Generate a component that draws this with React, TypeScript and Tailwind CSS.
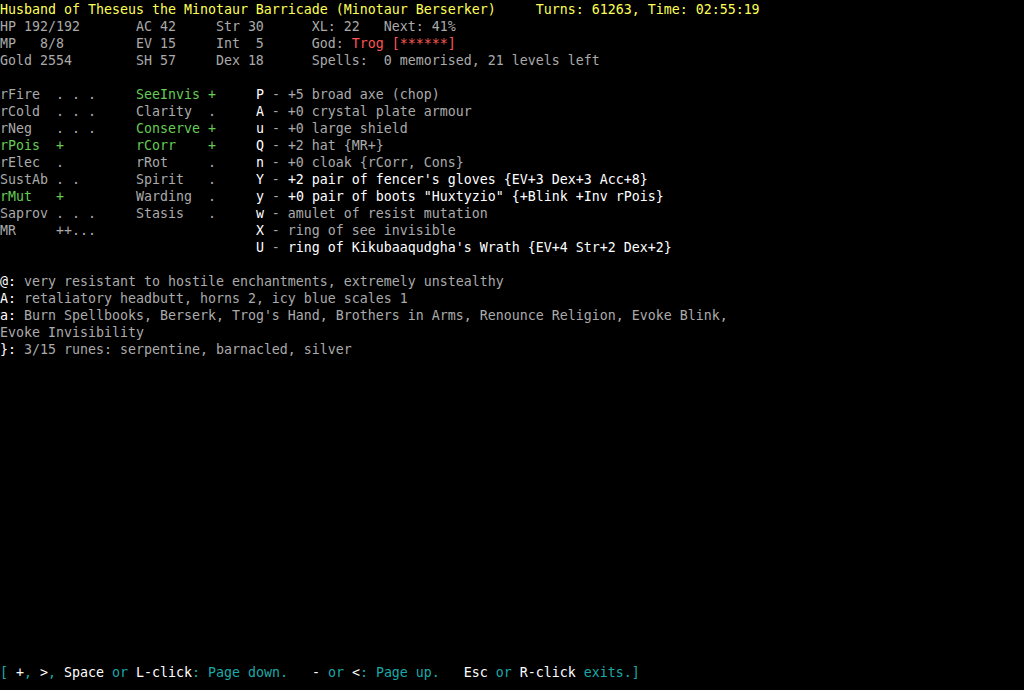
const G = "text-[#aaaaaa]";
const W = "text-[#ffffff]";
const Y = "text-[#ffff55]";
const GR = "text-[#66cc55]";
const R = "text-[#ff5555]";
const C = "text-[#1aa9a9]";

type Seg = [string, string];

const Line = ({ segs }: { segs: Seg[] }) => (
    <div className="h-[17px] whitespace-pre">
        {segs.map(([cls, text], i) => (
            <span key={i} className={cls}>{text}</span>
        ))}
    </div>
);

const lines: Seg[][] = [
    [[Y, "Husband of Theseus the Minotaur Barricade (Minotaur Berserker)     Turns: 61263, Time: 02:55:19"]],
    [[G, "HP 192/192       AC 42     Str 30      XL: 22   Next: 41%"]],
    [[G, "MP   8/8         EV 15     Int  5      God: "], [R, "Trog [******]"]],
    [[G, "Gold 2554        SH 57     Dex 18      Spells:  0 memorised, 21 levels left"]],
    [[G, " "]],
    [[G, "rFire  . . .     "], [GR, "SeeInvis +"], [G, "     "], [W, "P"], [G, " - +5 broad axe (chop)"]],
    [[G, "rCold  . . .     Clarity  .     "], [W, "A"], [G, " - +0 crystal plate armour"]],
    [[G, "rNeg   . . .     "], [GR, "Conserve +"], [G, "     "], [W, "u"], [G, " - +0 large shield"]],
    [[GR, "rPois  +         rCorr    +"], [G, "     "], [W, "Q"], [G, " - +2 hat {MR+}"]],
    [[G, "rElec  .         rRot     .     "], [W, "n"], [G, " - +0 cloak {rCorr, Cons}"]],
    [[G, "SustAb . .       Spirit   .     "], [W, "Y"], [G, " - "], [W, "+2 pair of fencer's gloves {EV+3 Dex+3 Acc+8}"]],
    [[GR, "rMut   +         "], [G, "Warding  .     "], [W, "y"], [G, " - "], [W, "+0 pair of boots \"Huxtyzio\" {+Blink +Inv rPois}"]],
    [[G, "Saprov . . .     Stasis   .     "], [W, "w"], [G, " - amulet of resist mutation"]],
    [[G, "MR     ++...                    "], [W, "X"], [G, " - ring of see invisible"]],
    [[G, "                                "], [W, "U"], [G, " - "], [W, "ring of Kikubaaqudgha's Wrath {EV+4 Str+2 Dex+2}"]],
    [[G, " "]],
    [[W, "@:"], [G, " very resistant to hostile enchantments, extremely unstealthy"]],
    [[W, "A:"], [G, " retaliatory headbutt, horns 2, icy blue scales 1"]],
    [[W, "a:"], [G, " Burn Spellbooks, Berserk, Trog's Hand, Brothers in Arms, Renounce Religion, Evoke Blink,"]],
    [[G, "Evoke Invisibility"]],
    [[W, "}:"], [G, " 3/15 runes: serpentine, barnacled, silver"]],
];

const footer: Seg[] = [
    [C, "["], [W, " +"], [C, ","], [W, " >"], [C, ","], [W, " Space"], [C, " or"], [W, " L-click"],
    [C, ": Page down."], [W, "   -"], [C, " or"], [W, " <"], [C, ": Page up."], [W, "   Esc"],
    [C, " or"], [W, " R-click"], [C, " exits.]"],
];

export default function App() {
    return (
        <div className="w-[1024px] h-[690px] bg-black flex flex-col pt-px font-['DejaVu_Sans_Mono',monospace] text-[13.29px] leading-[17px] overflow-hidden">
            <div>
                {lines.map((segs, i) => (
                    <Line key={i} segs={segs} />
                ))}
            </div>
            {/* key help bar */}
            <div className="mt-auto mb-[9px]">
                <Line segs={footer} />
            </div>
        </div>
    );
}
